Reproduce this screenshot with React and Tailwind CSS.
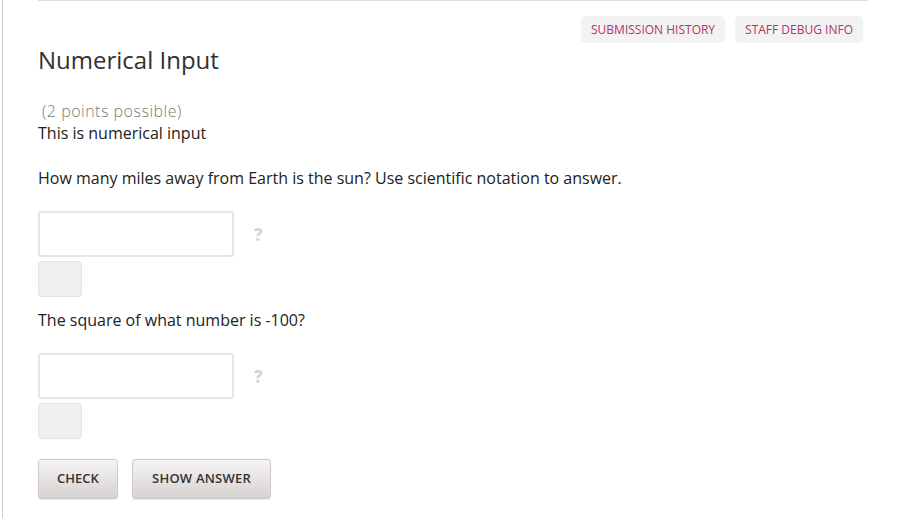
export default function App() {
  const font = { fontFamily: '"Open Sans", "Noto Sans", sans-serif' };
  const InputRow = () => (
    <div className="flex items-center">
      <div className="w-[196px] h-[46px] border-2 border-[#e6e6e6] rounded-[3px] bg-white" />
      <span className="ml-[20px] text-[17px] font-extrabold text-[#d8d8d8] leading-none">?</span>
    </div>
  );
  const GrayBox = () => (
    <div className="mt-[4px] w-[44px] h-[36px] bg-[#f0f0f0] border border-[#e3e3e3] rounded-[4px]" />
  );
  return (
    <div className="min-h-[518px] bg-white" style={font}>
      <div className="ml-[2px] min-h-[518px] border-l border-[#cfcfcf] pl-[35px]">
        <div className="w-[830px] border-t border-[#dddddd]">
          <div className="flex justify-end gap-[10px] pr-[5px] mt-[15px]">
            <div className="h-[27px] px-[10px] flex items-center bg-[#f2f2f2] rounded-[5px] text-[12px] text-[#b3336e]">SUBMISSION HISTORY</div>
            <div className="h-[27px] px-[10px] flex items-center bg-[#f2f2f2] rounded-[5px] text-[12px] text-[#b3336e]">STAFF DEBUG INFO</div>
          </div>
          <h3 className="mt-[1px] text-[24px] leading-[32px] text-[#313131]">Numerical Input</h3>
          <div className="mt-[24px] text-[16px] font-light tracking-[0.5px] leading-[22px] text-[#7a7a7a] pl-[4px]">(2 points possible)</div>
          <div className="text-[16px] leading-[22px] text-[#222]">This is numerical input</div>
          <div className="mt-[23px] text-[16px] leading-[22px] text-[#222]">How many miles away from Earth is the sun? Use scientific notation to answer.</div>
          <div className="mt-[22px]"><InputRow /></div>
          <GrayBox />
          <div className="mt-[12px] text-[16px] leading-[22px] text-[#222]">The square of what number is -100?</div>
          <div className="mt-[22px]"><InputRow /></div>
          <GrayBox />
          <div className="mt-[20px] flex gap-[14px]">
            <div className="w-[80px] h-[40px] flex items-center justify-center rounded-[3px] border border-[#cfcaca] bg-gradient-to-b from-[#f6f4f4] to-[#d8d2d2] text-[13px] font-semibold text-[#333] shadow-[0_1px_1px_rgba(0,0,0,0.08)]">CHECK</div>
            <div className="w-[139px] h-[40px] flex items-center justify-center rounded-[3px] border border-[#cfcaca] bg-gradient-to-b from-[#f6f4f4] to-[#d8d2d2] text-[13px] font-semibold text-[#333] tracking-[0.2px] shadow-[0_1px_1px_rgba(0,0,0,0.08)]">SHOW ANSWER</div>
          </div>
        </div>
      </div>
    </div>
  );
}
